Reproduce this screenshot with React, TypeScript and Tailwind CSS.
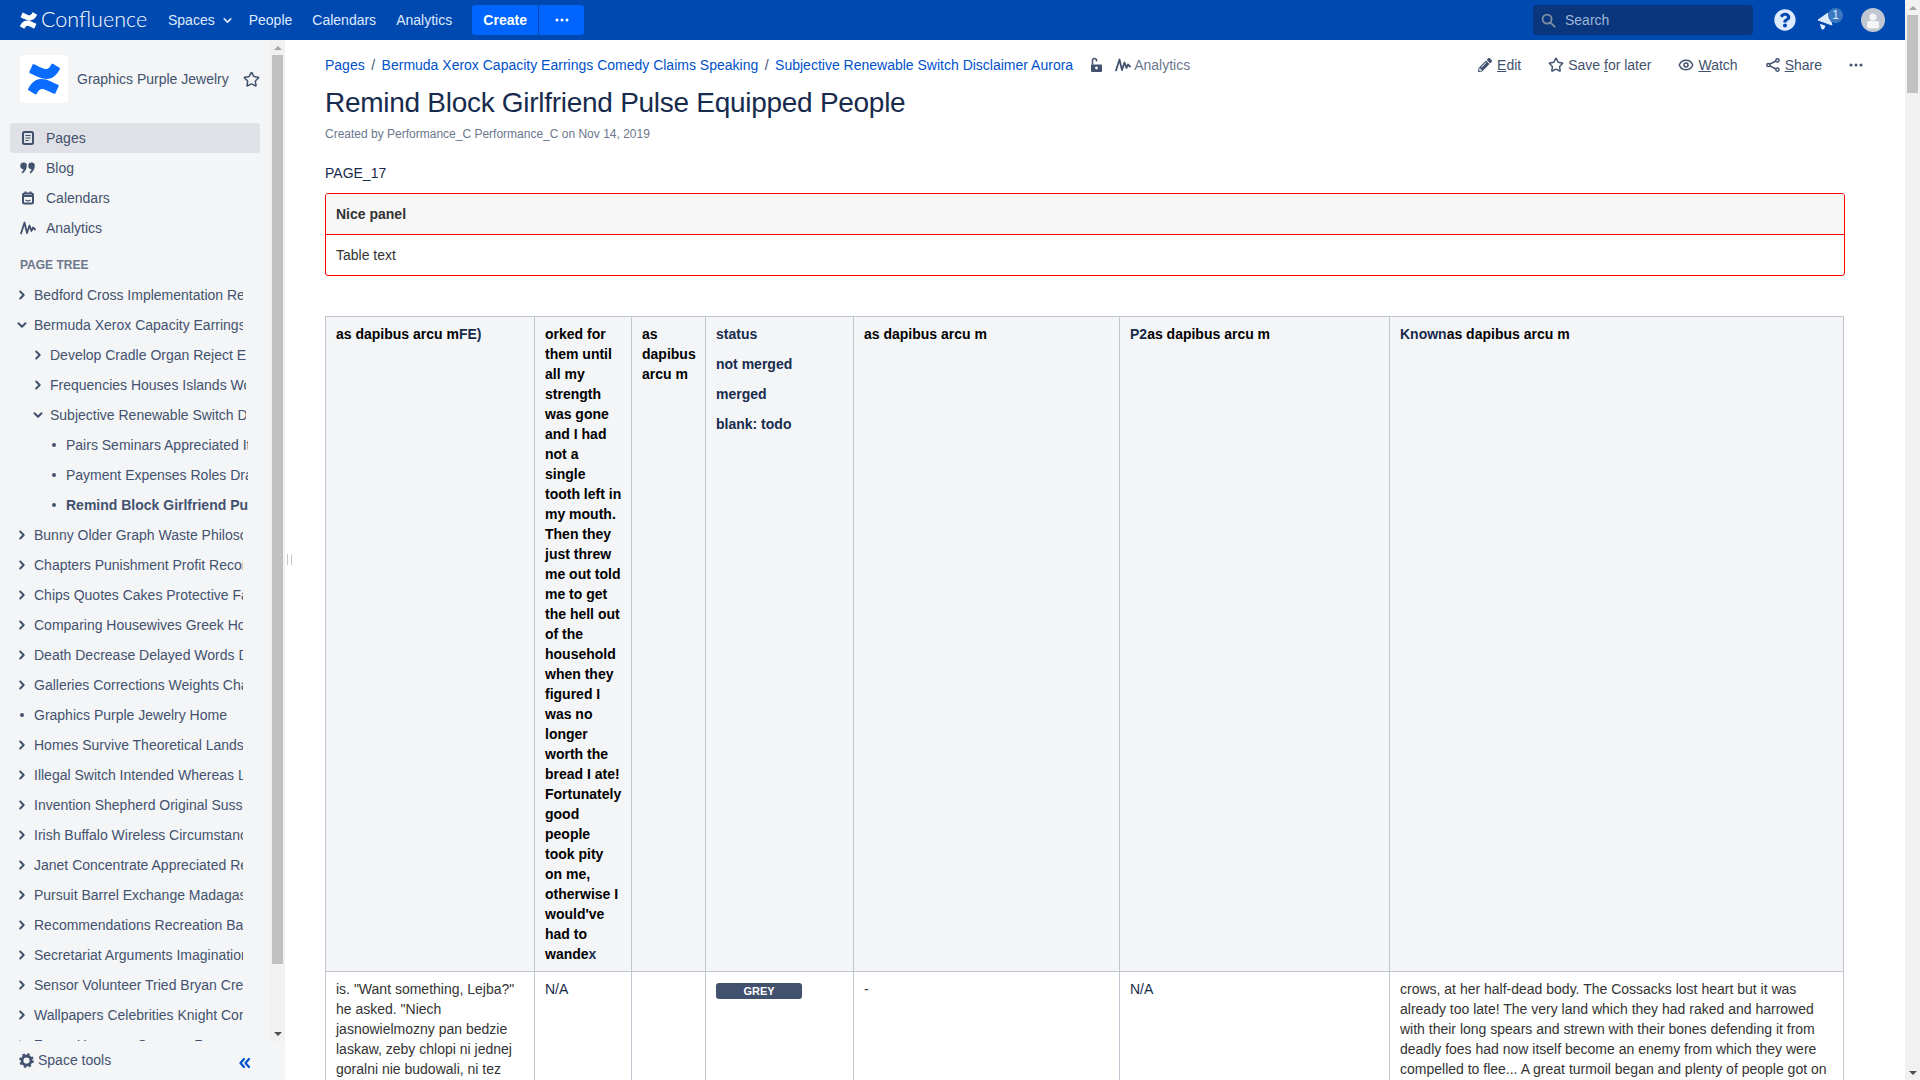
import { ChevronDown, Eye, Star } from "lucide-react";
import { FaConfluence, FaPencilAlt, FaQuestionCircle } from "react-icons/fa";

const font = { fontFamily: '"Liberation Sans", Arial, sans-serif' };

const treeRows: { label: string; level: 0 | 1 | 2; kind: "closed" | "open" | "leaf"; bold?: boolean }[] = [
  { label: "Bedford Cross Implementation Referee", level: 0, kind: "closed" },
  { label: "Bermuda Xerox Capacity Earrings Comedy", level: 0, kind: "open" },
  { label: "Develop Cradle Organ Reject Essex", level: 1, kind: "closed" },
  { label: "Frequencies Houses Islands Workshop", level: 1, kind: "closed" },
  { label: "Subjective Renewable Switch Disclaimer", level: 1, kind: "open" },
  { label: "Pairs Seminars Appreciated Italy", level: 2, kind: "leaf" },
  { label: "Payment Expenses Roles Drama", level: 2, kind: "leaf" },
  { label: "Remind Block Girlfriend Pulse", level: 2, kind: "leaf", bold: true },
  { label: "Bunny Older Graph Waste Philosophy", level: 0, kind: "closed" },
  { label: "Chapters Punishment Profit Record", level: 0, kind: "closed" },
  { label: "Chips Quotes Cakes Protective Fair", level: 0, kind: "closed" },
  { label: "Comparing Housewives Greek Holder", level: 0, kind: "closed" },
  { label: "Death Decrease Delayed Words Dealer", level: 0, kind: "closed" },
  { label: "Galleries Corrections Weights Chain", level: 0, kind: "closed" },
  { label: "Graphics Purple Jewelry Home", level: 0, kind: "leaf" },
  { label: "Homes Survive Theoretical Landscape", level: 0, kind: "closed" },
  { label: "Illegal Switch Intended Whereas Lake", level: 0, kind: "closed" },
  { label: "Invention Shepherd Original Sussex", level: 0, kind: "closed" },
  { label: "Irish Buffalo Wireless Circumstances", level: 0, kind: "closed" },
  { label: "Janet Concentrate Appreciated Return", level: 0, kind: "closed" },
  { label: "Pursuit Barrel Exchange Madagascar", level: 0, kind: "closed" },
  { label: "Recommendations Recreation Bay", level: 0, kind: "closed" },
  { label: "Secretariat Arguments Imagination", level: 0, kind: "closed" },
  { label: "Sensor Volunteer Tried Bryan Creek", level: 0, kind: "closed" },
  { label: "Wallpapers Celebrities Knight Corner", level: 0, kind: "closed" },
  { label: "Zones Harmony Summer Rogers Queen", level: 0, kind: "closed" },
];

function AnalyticsIcon({ className }: { className?: string }) {
  return (
    <svg className={className} viewBox="0 0 16 16" fill="none" stroke="currentColor" strokeWidth={1.8} strokeLinecap="round" strokeLinejoin="round">
      <path d="M1 13.5 4.5 2.5 7 13 9.5 5.5 11.5 11 13 7.5 15 9.5" />
    </svg>
  );
}

function Dots({ className }: { className?: string }) {
  return (
    <svg className={className} viewBox="0 0 14 4" fill="currentColor">
      <circle cx="2" cy="2" r="1.5" />
      <circle cx="7" cy="2" r="1.5" />
      <circle cx="12" cy="2" r="1.5" />
    </svg>
  );
}

function Triangle({ up, className }: { up?: boolean; className?: string }) {
  return (
    <svg className={className} viewBox="0 0 8 4" fill="currentColor">
      <path d={up ? "M4 0 8 4H0Z" : "M0 0H8L4 4Z"} />
    </svg>
  );
}

function TreeChevron({ open }: { open?: boolean }) {
  return (
    <svg className="h-[10px] w-[10px] text-[#42526e]" viewBox="0 0 10 10" fill="none" stroke="currentColor" strokeWidth={2} strokeLinecap="round" strokeLinejoin="round">
      <path d={open ? "M1.5 3.2 5 6.7 8.5 3.2" : "M3.2 1.5 6.7 5 3.2 8.5"} />
    </svg>
  );
}

function TopBar() {
  return (
    <header className="flex h-10 items-center bg-[#0049b0] pl-5 pr-[20px] text-sm text-[#deebff]">
      <div className="flex w-[138px] items-center text-white">
        <FaConfluence className="h-[17px] w-[17px]" />
        <span className="ml-[4px] text-[21.500px] font-light leading-none" style={{ fontFamily: "Lato, sans-serif" }}>Confluence</span>
      </div>
      <span className="ml-[10px] flex items-center">
        Spaces
        <ChevronDown className="ml-[6px] h-[13px] w-[13px]" strokeWidth={3} />
      </span>
      <span className="ml-[15px]">People</span>
      <span className="ml-5">Calendars</span>
      <span className="ml-5">Analytics</span>
      <button className="ml-5 h-[30px] w-[66px] rounded-l-[3px] bg-[#0065ff] font-bold text-white">Create</button>
      <button className="ml-px flex h-[30px] w-[45px] items-center justify-center rounded-r-[3px] bg-[#0065ff] text-white">
        <Dots className="h-1 w-[14px]" />
      </button>
      <div className="ml-auto flex h-[30px] w-[220px] items-center rounded-[3px] bg-[#09367c] pl-2 text-[#9fb6d8]">
        <svg className="h-[15px] w-[15px] text-[#7f8ea6]" viewBox="0 0 16 16" fill="none" stroke="currentColor" strokeWidth={2} strokeLinecap="round">
          <circle cx="6.5" cy="6.5" r="4.8" />
          <path d="m10.2 10.2 4.3 4.3" />
        </svg>
        <span className="ml-[9px]">Search</span>
      </div>
      <FaQuestionCircle className="ml-[21px] h-[22px] w-[22px] text-[#deebff]" />
      <span className="relative ml-[19px] flex h-6 w-6 items-center justify-center">
        <svg className="mr-[4px] mt-[2px] h-[18px] w-4 text-[#deebff]" viewBox="0 0 16 18" fill="currentColor" stroke="currentColor" strokeLinejoin="round">
          <path d="M1 8 11 1l4 12Z" />
          <path d="M3.5 12.5 8 14l-1.500 3H5Z" />
        </svg>
        <span className="absolute -right-[4px] top-0 flex h-[15px] w-[15px] items-center justify-center rounded-full bg-[#3a78bf] text-[12px] text-[#deebff]">1</span>
      </span>
      <svg className="ml-[22px] h-6 w-6" viewBox="0 0 24 24">
        <circle cx="12" cy="12" r="12" fill="#c1c7d0" />
        <circle cx="12" cy="9" r="3.6" fill="#f4f5f7" />
        <rect x="6" y="13" width="12" height="7.5" rx="2" fill="#f4f5f7" />
      </svg>
    </header>
  );
}

function SideLink({ label, active, children }: { label: string; active?: boolean; children: React.ReactNode }) {
  return (
    <div className={`ml-[10px] flex h-[30px] w-[250px] items-center rounded-[3px] pl-[10px] text-sm text-[#42526e] ${active ? "bg-[#dfe1e6]" : ""}`}>
      <span className="flex w-4 justify-center">{children}</span>
      <span className="ml-[10px]">{label}</span>
    </div>
  );
}

function TreeRow({ row }: { row: (typeof treeRows)[number] }) {
  const pad = row.level === 0 ? "pl-[16px]" : row.level === 1 ? "pl-[32px]" : "pl-[48px]";
  const clip = row.level === 0 ? "w-[209px]" : row.level === 1 ? "w-[196px]" : "w-[182px]";
  return (
    <div className={`flex h-[30px] items-center text-sm text-[#42526e] ${pad}`}>
      <span className="flex w-3 justify-center">
        {row.kind === "closed" && <TreeChevron />}
        {row.kind === "open" && <TreeChevron open />}
        {row.kind === "leaf" && <span className="h-1 w-1 rounded-full bg-[#42526e]" />}
      </span>
      <span className={`ml-[6px] overflow-hidden whitespace-nowrap ${clip} ${row.bold ? "font-bold" : ""}`}>{row.label}</span>
    </div>
  );
}

function Sidebar() {
  return (
    <aside className="flex h-[1040px] w-[285px] shrink-0 flex-col bg-[#f4f5f7]">
      <div className="flex h-[1001px]">
        <div className="w-[270px] overflow-hidden pt-[15px]">
          <div className="flex items-center pl-5">
            <div className="flex h-12 w-12 items-center justify-center rounded-[3px] bg-white">
              <FaConfluence className="h-8 w-8 text-[#0a6cff]" />
            </div>
            <span className="ml-[9px] w-[166px] whitespace-nowrap text-sm text-[#42526e]">Graphics Purple Jewelry</span>
            <Star className="h-[17px] w-[17px] shrink-0 text-[#42526e]" strokeWidth={2.2} />
          </div>
          <div className="mt-5">
            <SideLink label="Pages" active>
              <svg className="h-4 w-4" viewBox="0 0 16 16" fill="none" stroke="currentColor" strokeWidth={2}>
                <rect x="3" y="2" width="10" height="12" rx="1.5" />
                <path d="M5.5 5.500h5M5.500 8h5M5.500 10.500h3" strokeWidth={1.2} />
              </svg>
            </SideLink>
            <SideLink label="Blog">
              <svg className="h-4 w-4" viewBox="0 0 16 16" fill="currentColor">
                <path d="M3.800 2.500a3 3 0 0 1 3 3c0 3.500-1.800 6.500-4.300 8l-.9-1.100c1.100-1 1.800-2 2-3.100a3 3 0 0 1 .2-6.800Z" />
                <path d="M11.800 2.500a3 3 0 0 1 3 3c0 3.500-1.800 6.500-4.300 8l-.9-1.100c1.100-1 1.800-2 2-3.100a3 3 0 0 1 .2-6.800Z" />
              </svg>
            </SideLink>
            <SideLink label="Calendars">
              <svg className="h-4 w-4" viewBox="0 0 16 16" fill="none" stroke="currentColor" strokeWidth={2}>
                <rect x="3" y="3.500" width="10" height="10" rx="1.500" />
                <path d="M3 6h10M5.500 1.500v2M10.500 1.500v2" />
                <path d="M5.500 10c1.500 1.200 3.500 1.200 5 0" strokeWidth={1.3} />
              </svg>
            </SideLink>
            <SideLink label="Analytics">
              <AnalyticsIcon className="h-4 w-4" />
            </SideLink>
          </div>
          <div className="mb-2 ml-5 mt-[15px] text-xs font-bold leading-[14px] text-[#6b778c]">PAGE TREE</div>
          {treeRows.map((row) => (
            <TreeRow key={row.label} row={row} />
          ))}
        </div>
        <div className="flex w-[15px] flex-col bg-[#f1f1f1]">
          <div className="flex h-[15px] items-center justify-center">
            <Triangle up className="h-1 w-2 text-[#a3a3a3]" />
          </div>
          <div className="ml-[2px] h-[909px] w-[11px] bg-[#c1c1c1]" />
          <div className="mt-auto flex h-[15px] items-center justify-center">
            <Triangle className="h-1 w-2 text-[#505050]" />
          </div>
        </div>
      </div>
      <div className="flex flex-1 items-center pb-px pl-[19px] pr-[35px] text-sm text-[#42526e]">
        <svg className="h-[15px] w-[15px]" viewBox="0 0 16 16" fill="none" stroke="currentColor">
          <circle cx="8" cy="8" r="4.800" strokeWidth={3} />
          <circle cx="8" cy="8" r="6.800" strokeWidth={2} strokeDasharray="2.700 2.640" />
        </svg>
        <span className="ml-[4px]">Space tools</span>
        <svg className="ml-auto mt-[5px] h-[10px] w-[11px] text-[#0052cc]" viewBox="0 0 11 10" fill="none" stroke="currentColor" strokeWidth={2.2} strokeLinecap="round" strokeLinejoin="round">
          <path d="M5 1 1.500 5 5 9M10 1 6.500 5 10 9" />
        </svg>
      </div>
    </aside>
  );
}

function Action({ icon, children, className }: { icon: React.ReactNode; children: React.ReactNode; className: string }) {
  return (
    <span className={`flex items-center whitespace-nowrap text-sm text-[#42526e] ${className}`}>
      <span className="flex w-[14px] justify-center">{icon}</span>
      <span className="ml-[5px]">{children}</span>
    </span>
  );
}

function PageHeader() {
  return (
    <div>
      <div className="flex h-10 items-center pt-[10px] text-sm">
        <span className="text-[#0052cc]">Pages</span>
        <span className="mx-[6.500px] text-[#42526e]">/</span>
        <span className="text-[#0052cc]">Bermuda Xerox Capacity Earrings Comedy Claims Speaking</span>
        <span className="mx-[6.500px] text-[#42526e]">/</span>
        <span className="text-[#0052cc]">Subjective Renewable Switch Disclaimer Aurora</span>
        <svg className="ml-[16px] h-[16px] w-[14px] text-[#42526e]" viewBox="0 0 14 16" fill="currentColor">
          <path d="M2 7.500h10a1 1 0 0 1 1 1V14a1 1 0 0 1-1 1H3a1 1 0 0 1-1-1Z" />
          <path d="M3.500 7.500V3.500a2 2 0 0 1 4 0v1" fill="none" stroke="currentColor" strokeWidth={1.5} />
          <circle cx="7.500" cy="11" r="1.400" fill="#fff" />
        </svg>
        <AnalyticsIcon className="ml-[12px] h-[16px] w-[16px] text-[#42526e]" />
        <span className="ml-[3px] text-[#6b778c]">Analytics</span>
        <Action className="ml-auto" icon={<FaPencilAlt className="h-[14px] w-[14px] shrink-0" />}>
          <u>E</u>dit
        </Action>
        <Action className="ml-[28px]" icon={<Star className="h-4 w-4 shrink-0" strokeWidth={2.2} />}>
          Save <u>f</u>or later
        </Action>
        <Action className="ml-[28px]" icon={<Eye className="h-4 w-4 shrink-0" strokeWidth={2.2} />}>
          <u>W</u>atch
        </Action>
        <Action className="ml-[28px]" icon={
          <svg className="h-[14px] w-[14px]" viewBox="0 0 14 14" fill="none" stroke="currentColor" strokeWidth={1.5}>
            <circle cx="2.400" cy="7" r="1.600" />
            <circle cx="11.400" cy="2.400" r="1.600" />
            <circle cx="11.400" cy="11.600" r="1.600" />
            <path d="m3.800 6.200 6.200-3.200M3.800 7.800l6.200 3.200" />
          </svg>
        }>
          <u>S</u>hare
        </Action>
        <Dots className="-mr-[18px] ml-[27px] h-1 w-[14px] shrink-0 text-[#42526e]" />
      </div>
      <h1 className="mt-[3px] text-[28px] leading-[40px] tracking-[-0.01em] text-[#172b4d]">Remind Block Girlfriend Pulse Equipped People</h1>
      <p className="mt-[1px] text-xs leading-[20px] text-[#6b778c]">Created by Performance_C Performance_C on Nov 14, 2019</p>
    </div>
  );
}

const cellBase = "border border-[#c1c7d0] px-[10px] pb-[7px] pt-[7px] align-top text-sm leading-5";
const headBase = `${cellBase} bg-[#f4f5f7] font-bold`;
const bodyBase = cellBase;

function DataTable() {
  const head = `${headBase} text-black`;
  const body = `${bodyBase} text-[#333333]`;
  return (
    <table className="mt-[40px] w-[1518px] table-fixed border-collapse">
      <colgroup>
        <col className="w-[209px]" />
        <col className="w-[97px]" />
        <col className="w-[74px]" />
        <col className="w-[148px]" />
        <col className="w-[266px]" />
        <col className="w-[270px]" />
        <col className="w-[454px]" />
      </colgroup>
      <tbody>
        <tr>
          <td className={head}>as dapibus arcu m<span className="text-[#172b4d]">FE)</span></td>
          <td className={`${head} !pr-[9.500px]`}>
            orked for them until all my strength was gone and I had not a single tooth left in my mouth. Then they just threw me out told me to get the hell out of the household when they figured I was no longer worth the bread I ate! Fortunately good people took pity on me, otherwise I would've had to wande<span className="text-[#172b4d]">x</span>
          </td>
          <td className={head}>as dapibus arcu m</td>
          <td className={`${headBase} text-[#172b4d]`}>
            <p>status</p>
            <p className="mt-[10px]">not merged</p>
            <p className="mt-[10px]">merged</p>
            <p className="mt-[10px]">blank: todo</p>
          </td>
          <td className={head}>as dapibus arcu m</td>
          <td className={head}><span className="text-[#172b4d]">P2</span>as dapibus arcu m</td>
          <td className={head}><span className="text-[#172b4d]">Known</span>as dapibus arcu m</td>
        </tr>
        <tr>
          <td className={body}>
            is. "Want something, Lejba?" he asked. "Niech jasnowielmozny pan bedzie laskaw, zeby chlopi ni jednej goralni nie budowali, ni tez karczmy nie stawiali na swoich gruntach.
          </td>
          <td className={`${bodyBase} text-[#172b4d]`}>N/A</td>
          <td className={body}></td>
          <td className={body}>
            <span className="mt-1 flex h-4 w-[86px] items-center justify-center rounded-[3px] bg-[#42526e] text-[11px] font-bold leading-none text-white">GREY</span>
          </td>
          <td className={body}>-</td>
          <td className={`${bodyBase} text-[#172b4d]`}>N/A</td>
          <td className={body}>
            crows, at her half-dead body. The Cossacks lost heart but it was already too late! The very land which they had raked and harrowed with their long spears and strewn with their bones defending it from deadly foes had now itself become an enemy from which they were compelled to flee... A great turmoil began and plenty of people got on their knees.
          </td>
        </tr>
      </tbody>
    </table>
  );
}

export default function App() {
  return (
    <div className="flex h-screen overflow-hidden bg-white" style={font}>
      <div className="w-[1905px] shrink-0">
        <TopBar />
        <div className="flex">
          <Sidebar />
          <div className="flex h-[1040px] w-5 shrink-0 items-start pl-[2px] pt-[514px]">
            <span className="h-[11px] w-[5px] border-x border-[#c1c7d0]" />
          </div>
          <main className="w-[1580px] pl-5 pr-[40px]">
            <PageHeader />
            <p className="mt-[19px] text-sm leading-5 text-[#172b4d]">PAGE_17</p>
            <div className="mt-[10px] overflow-hidden rounded-[3px] border border-[#ff0000] text-sm text-[#333333]">
              <div className="h-[41px] border-b border-[#ff0000] bg-[#f7f7f7] px-[10px] font-bold leading-[40px]">Nice panel</div>
              <div className="h-[40px] px-[10px] leading-[40px]">Table text</div>
            </div>
            <DataTable />
          </main>
        </div>
      </div>
      <div className="flex h-screen w-[15px] shrink-0 flex-col bg-[#f1f1f1]">
        <div className="flex h-[15px] items-center justify-center">
          <Triangle up className="h-1 w-2 text-[#a3a3a3]" />
        </div>
        <div className="ml-[2px] h-[78px] w-[11px] bg-[#c1c1c1]" />
        <div className="mt-auto flex h-[15px] items-center justify-center">
          <Triangle className="h-1 w-2 text-[#505050]" />
        </div>
      </div>
    </div>
  );
}
